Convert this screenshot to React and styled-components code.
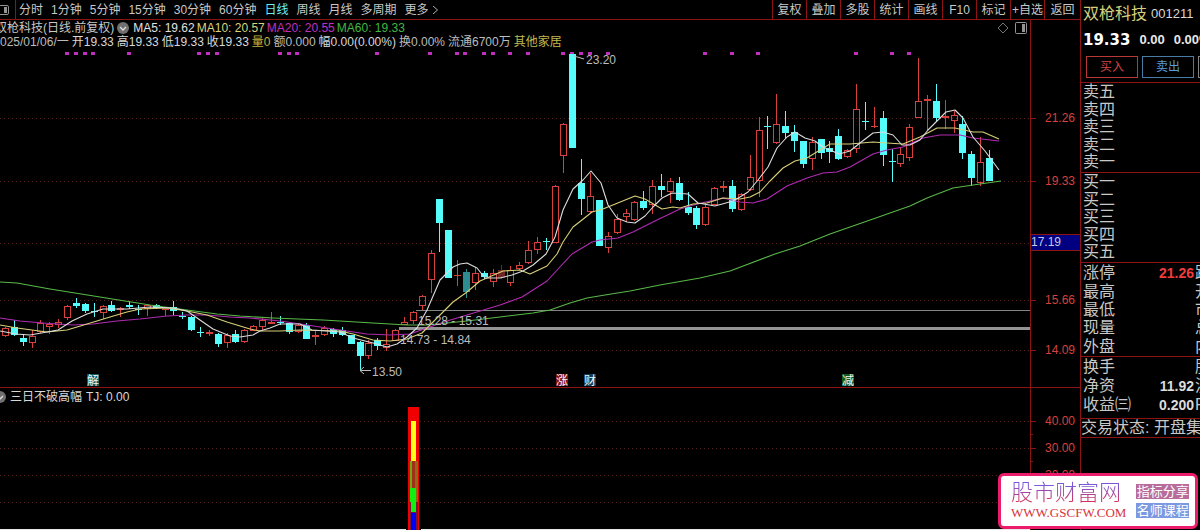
import React from "react";
import styled, { createGlobalStyle } from "styled-components";

const RED_LINE = "#8e1414";
const UP = "#d8403c";
const DOWN = "#54fcfc";
const SANS = '"Liberation Sans", "Noto Sans CJK SC", sans-serif';

const GlobalStyle = createGlobalStyle`
  * { box-sizing: border-box; }
  body {
    margin: 0;
    background: #000;
    color: #c8c8c8;
    font: 12px/14px ${SANS};
    overflow-x: hidden;
  }
  button { font: inherit; color: inherit; background: none; border: 0; padding: 0; cursor: pointer; }
  svg { display: block; }
`;

const Page = styled.div`
  display: flex;
  min-height: 100vh;
  overflow: hidden;
`;

const Main = styled.main`
  flex: 1;
  min-width: 0;
  display: flex;
  flex-direction: column;
`;

const Toolbar = styled.nav`
  display: flex;
  height: 20px;
  border-bottom: 1px solid ${RED_LINE};
  white-space: nowrap;
`;

const LayoutToggle = styled.button`
  width: 16px;
  border-right: 1px solid ${RED_LINE};
`;

const Periods = styled.div`
  flex: 1;
  display: flex;
  align-items: center;
  gap: 8px;
  padding-left: 3px;
`;

const Period = styled.button`
  display: flex;
  align-items: center;
  gap: 3px;
  color: ${(p) => (p.$active ? "#6ff0f4" : "#c8c8c8")};
`;

const Tool = styled.button`
  width: 34px;
  border-left: 1px solid ${RED_LINE};
  &:last-child { width: 36px; }
`;

const Pane = styled.section`
  display: flex;
  border-bottom: ${(p) => (p.$divided ? `1px solid ${RED_LINE}` : "0")};
`;

const PlotColumn = styled.div`
  flex: 1;
  min-width: 0;
`;

const AxisColumn = styled.div`
  width: 50px;
  border-left: 1px solid ${RED_LINE};
`;

const PlotHeader = styled.header`
  height: 30px;
  padding-top: 1px;
  overflow: hidden;
  white-space: nowrap;
`;

const HeaderRow = styled.div`
  display: flex;
  align-items: center;
  gap: ${(p) => p.$gap}px;
  height: 14px;
`;

const ChartTitle = styled.span`
  margin-left: -5px;
  padding-right: 1px;
`;

const Reading = styled.span`
  color: ${(p) => p.$color || "#d8d8d8"};
`;

const HeaderTools = styled.div`
  flex: 1;
  display: flex;
  justify-content: flex-end;
  align-items: center;
  gap: 6px;
  padding-right: 3px;
`;

const IndicatorHeader = styled.header`
  display: flex;
  align-items: center;
  gap: 4px;
  height: 17px;
  overflow: hidden;
  white-space: nowrap;
  svg { margin-left: -6px; }
`;

const PlotSvg = styled.svg`
  width: 100%;
  height: ${(p) => p.$height}px;
`;

const Side = styled.aside`
  width: 120px;
  border-left: 1px solid ${RED_LINE};
  overflow: hidden;
  white-space: nowrap;
  font-size: 16px;
`;

const QuoteHead = styled.div`
  height: 82px;
  padding-left: 2px;
`;

const QuoteName = styled.div`
  display: flex;
  align-items: center;
  gap: 4px;
  height: 28px;
  color: #d6d07c;
`;

const QuoteCode = styled.span`
  font-size: 13px;
  color: #d8d8d8;
`;

const QuotePrice = styled.div`
  display: flex;
  align-items: center;
  gap: 9px;
  height: 24px;
  font-size: 13px;
  font-weight: bold;
  color: #e8e8e8;
`;

const LastPrice = styled.strong`
  font: bold 15px "DejaVu Sans", sans-serif;
  color: #fff;
`;

const TradeRow = styled.div`
  display: flex;
  gap: 4px;
  padding: 4px 0 4px 3px;
`;

const TradeButton = styled.button`
  flex: none;
  width: 52px;
  height: 22px;
  border: 1px solid ${(p) => p.$edge};
  color: ${(p) => p.$ink};
  font-size: 12px;
`;

const Block = styled.div`
  display: grid;
  grid-auto-rows: 1fr;
  height: ${(p) => p.$height}px;
  padding: 1px 0 ${(p) => p.$foot || 0}px 2px;
  border-top: 1px solid ${RED_LINE};
  line-height: 16px;
`;

const QuoteRow = styled.div`
  display: grid;
  grid-template-columns: 50px 60px max-content;
  column-gap: 1px;
  align-items: center;
`;

const Figure = styled.span`
  text-align: right;
  font-size: 14px;
  font-weight: bold;
  color: ${(p) => p.$color || "#dcdcdc"};
`;

const Status = styled.div`
  height: 20px;
  line-height: 17px;
  border: solid ${RED_LINE};
  border-width: 1px 0;
`;

const Watermark = styled.a`
  position: fixed;
  right: 2px;
  bottom: 1px;
  width: 200px;
  height: 56px;
  display: flex;
  align-items: center;
  gap: 10px;
  padding-left: 10px;
  background: #fff;
  border: 3px solid #ec1c6c;
  border-radius: 6px;
  text-decoration: none;
  white-space: nowrap;
`;

const SiteName = styled.span`
  display: block;
  font-size: 22px;
  line-height: 23px;
  font-weight: 300;
  color: transparent;
  background: linear-gradient(#7a58d8 20%, #d03460 85%);
  background-clip: text;
  -webkit-background-clip: text;
`;

const SiteUrl = styled.span`
  display: block;
  font: 13px/17px "Liberation Serif", serif;
  color: #d8343c;
`;

const Tags = styled.span`
  display: grid;
  gap: 4px;
`;

const Tag = styled.span`
  width: 53px;
  font-size: 13px;
  line-height: 15px;
  text-align: center;
  color: #fff;
  background: ${(p) => p.$fill};
`;

/* u: rising (hollow), d: falling (solid), t: teal body, r: dim red body; then high, body top, body bottom, low */
const CANDLES = [
  ["u", 327, 328, 336, 337], ["d", 320, 327, 335, 336], ["d", 334, 338, 342, 346], ["u", 330, 336, 343, 348],
  ["u", 320, 323, 332, 333], ["u", 322, 324, 327, 334], ["u", 319, 322, 325, 328], ["u", 305, 306, 318, 320],
  ["d", 298, 303, 306, 308], ["d", 303, 304, 311, 313], ["d", 303, 311, 312, 317], ["u", 305, 306, 313, 319],
  ["d", 301, 305, 311, 312], ["u", 307, 308, 310, 317], ["d", 301, 305, 307, 309], ["d", 305, 309, 310, 315],
  ["u", 304, 305, 309, 316], ["d", 304, 305, 308, 309], ["u", 309, 309, 310, 316], ["d", 301, 307, 311, 315],
  ["d", 312, 316, 317, 319], ["d", 316, 317, 330, 331], ["d", 327, 332, 333, 337], ["u", 330, 332, 334, 336],
  ["d", 333, 334, 344, 347], ["u", 333, 335, 343, 348], ["d", 330, 334, 342, 343], ["u", 329, 330, 342, 343],
  ["u", 325, 326, 331, 331], ["u", 317, 320, 327, 330], ["u", 312, 322, 324, 324], ["d", 316, 322, 323, 325],
  ["d", 322, 323, 332, 334], ["u", 324, 325, 332, 333], ["d", 323, 325, 339, 339], ["u", 331, 335, 337, 345],
  ["u", 326, 328, 335, 336], ["d", 328, 329, 334, 337], ["d", 327, 330, 335, 336], ["d", 335, 335, 344, 344],
  ["d", 341, 342, 356, 370], ["u", 340, 343, 356, 359], ["d", 338, 340, 346, 350], ["u", 329, 344, 348, 351],
  ["u", 329, 330, 341, 341], ["u", 317, 322, 325, 325], ["u", 311, 312, 321, 324], ["u", 295, 296, 306, 311],
  ["u", 250, 253, 280, 293], ["d", 199, 199, 223, 252], ["d", 230, 230, 278, 278], ["u", 260, 275, 276, 286],
  ["t", 269, 272, 292, 298], ["u", 267, 273, 283, 290], ["d", 271, 273, 277, 279], ["u", 269, 273, 282, 287],
  ["r", 265, 270, 278, 279], ["u", 266, 270, 283, 286], ["u", 262, 265, 269, 270], ["u", 241, 250, 263, 264],
  ["u", 237, 242, 250, 254], ["d", 238, 241, 242, 250], ["u", 185, 186, 243, 243], ["u", 123, 124, 156, 173],
  ["d", 54, 54, 148, 148], ["d", 159, 183, 199, 215], ["u", 173, 196, 212, 213], ["d", 200, 200, 246, 246],
  ["u", 232, 236, 248, 253], ["u", 214, 219, 233, 234], ["u", 209, 213, 217, 222], ["u", 201, 202, 220, 221],
  ["d", 191, 201, 208, 210], ["u", 180, 186, 205, 214], ["d", 174, 186, 190, 197], ["u", 178, 181, 192, 203],
  ["d", 177, 183, 200, 201], ["d", 192, 207, 213, 215], ["d", 206, 208, 225, 229], ["u", 203, 207, 225, 226],
  ["u", 187, 188, 205, 205], ["u", 181, 186, 188, 192], ["d", 180, 186, 209, 212], ["u", 193, 194, 210, 211],
  ["u", 155, 177, 190, 191], ["u", 117, 130, 181, 197], ["d", 116, 126, 127, 149], ["u", 94, 124, 143, 144],
  ["d", 111, 126, 133, 139], ["d", 125, 132, 141, 152], ["d", 141, 141, 164, 168], ["u", 137, 142, 159, 170],
  ["d", 139, 139, 153, 159], ["d", 141, 148, 152, 163], ["d", 129, 136, 159, 160], ["u", 149, 150, 157, 158],
  ["u", 84, 109, 149, 153], ["d", 102, 121, 122, 130], ["u", 107, 126, 127, 128], ["d", 111, 118, 155, 166],
  ["d", 149, 161, 162, 182], ["u", 147, 154, 164, 167], ["u", 124, 127, 158, 161], ["u", 58, 101, 118, 118],
  ["u", 95, 99, 101, 130], ["d", 84, 101, 118, 122], ["u", 100, 116, 118, 129], ["u", 111, 115, 121, 133],
  ["d", 116, 124, 153, 159], ["d", 151, 154, 178, 186], ["u", 137, 162, 183, 186], ["d", 150, 158, 181, 181],
];

const MA_LINES = [
  ["#58b848", "0,282 17,283 50,289 100,297 150,305 187,310 217,314 240,316 273,318 323,320 373,323 407,325 427,325 467,321 500,317 533,313 550,310 570,303 587,298 605,295 630,291 660,285 700,278 730,271 775,254 800,246 830,234 873,219 890,213 910,206 927,198 953,188 980,184 1001,181"],
  ["#b02cb0", "0,318 20,321 43,323 73,325 93,324 117,321 140,319 167,316 187,315 207,315 230,317 250,318 280,321 307,325 340,330 367,334 390,335 410,334 427,328 447,321 467,315 500,305 522,297 547,281 572,254 592,242 600,240 618,238 633,232 657,220 680,209 697,204 723,198 740,202 753,203 767,199 787,186 807,178 823,173 837,172 850,167 873,154 887,150 903,147 923,138 940,135 960,135 973,138 999,141"],
  ["#d8d078", "0,325 17,328 47,332 67,330 87,324 110,317 127,312 140,309 167,308 187,311 207,315 227,322 250,329 260,331 280,331 300,330 340,331 353,334 373,340 390,341 407,339 422,333 437,318 453,302 467,292 480,281 503,271 520,270 530,274 547,266 557,254 563,242 573,227 582,220 592,212 603,209 635,196 645,199 662,209 673,207 680,208 693,204 707,203 723,198 740,199 750,197 760,192 770,181 783,168 795,161 807,158 820,150 830,144 850,144 873,142 887,143 903,144 920,137 937,128 955,128 973,132 983,132 999,139"],
  ["#dcdcdc", "0,331 16,334 30,335 47,332 58,330 72,321 87,314 103,309 127,309 150,307 173,308 187,311 200,320 213,329 230,336 240,337 253,335 260,331 270,328 280,324 300,324 312,330 340,332 353,338 373,343 387,347 397,344 407,337 417,328 427,310 440,280 453,267 460,264 467,263 477,268 485,278 500,278 512,275 523,271 533,265 546,254 555,237 563,210 573,189 583,180 591,171 601,183 608,205 617,218 627,222 635,223 645,216 653,207 662,198 672,193 688,194 698,203 715,206 733,201 740,197 748,192 758,180 768,167 777,148 787,137 795,132 805,138 815,141 823,147 839,154 850,151 860,143 873,133 883,132 893,135 902,145 910,145 920,140 928,130 937,121 946,112 955,110 963,118 973,137 985,151 999,170"],
];

const SIGNAL_DOTS = [67, 76, 85, 93, 129, 199, 208, 217, 280, 289, 297, 377, 430, 457, 465, 484, 493, 510, 528, 563, 572, 581, 590, 608, 705, 732, 758, 856, 892, 909];

const EVENTS = [
  { x: 87, mark: "解", fill: "#0c5c60" },
  { x: 556, mark: "涨", fill: "#801414" },
  { x: 584, mark: "财", fill: "#0c3c5c" },
  { x: 842, mark: "减", fill: "#0c5c24" },
];

const Candle = ({ index, kind, high, top, bottom, low }) => {
  const x = Math.round(5 + 8.865 * index);
  const color = kind === "d" ? DOWN : kind === "t" ? "#2c8c90" : kind === "r" ? "#6c2424" : UP;
  const hollow = kind === "u" && bottom - top > 2;
  return (
    <g shapeRendering="crispEdges">
      <rect x={x} y={high} width="1" height={Math.max(top - high, 0)} fill={color} />
      <rect x={x} y={bottom} width="1" height={Math.max(low - bottom, 0)} fill={color} />
      {hollow ? (
        <rect x={x - 2.5} y={top + 0.5} width="6" height={bottom - top - 1} fill="none" stroke={color} />
      ) : (
        <rect x={x - 3} y={top} width="7" height={Math.max(bottom - top, 1)} fill={color} />
      )}
    </g>
  );
};

const GridLines = ({ rows }) =>
  rows.map((y) => (
    <line key={y} x1="0" x2="1030" y1={y + 0.5} y2={y + 0.5} stroke="#542020" strokeDasharray="1 3" shapeRendering="crispEdges" />
  ));

const PricePlot = () => (
  <PlotSvg $height={337} viewBox="0 50 1030 337" preserveAspectRatio="xMaxYMid meet" role="img" aria-label="日线图">
    <GridLines rows={[118, 181, 243, 300, 350]} />
    {SIGNAL_DOTS.map((x) => (
      <rect key={x} x={x - 2} y="52" width="4" height="3" fill="#c030c0" />
    ))}
    {CANDLES.map(([kind, high, top, bottom, low], i) => (
      <Candle key={i} index={i} kind={kind} high={high} top={top} bottom={bottom} low={low} />
    ))}
    <rect x="416" y="310" width="614" height="1" fill="#848484" />
    <rect x="399" y="327" width="631" height="3" fill="#949494" />
    {MA_LINES.map(([color, points]) => (
      <polyline key={color} points={points} fill="none" stroke={color} strokeWidth="1.1" strokeLinejoin="round" />
    ))}
    <g fill="#bcbcbc" fontSize="12">
      <text x="586" y="64">23.20</text>
      <text x="418" y="325">15.28 - 15.31</text>
      <text x="400" y="344">14.73 - 14.84</text>
      <text x="372" y="376">13.50</text>
    </g>
    <path d="M574 56 L584 59 M360 370.500 H371 M364 367 L360 370.500 L364 374" fill="none" stroke="#bcbcbc" />
    {EVENTS.map(({ x, mark, fill }) => (
      <g key={mark}>
        <rect x={x} y="374" width="12" height="12" fill={fill} />
        <text x={x} y="385" fontSize="12" fill="#f0f8f8">{mark}</text>
      </g>
    ))}
  </PlotSvg>
);

const PriceAxis = () => (
  <svg width="49" height="367" viewBox="1031 20 49 367">
    {[[118, "21.26"], [181, "19.33"], [300, "15.66"], [350, "14.09"]].map(([y, label]) => (
      <g key={label}>
        <rect x="1031" y={y} width="5" height="1" fill={RED_LINE} />
        <text x="1045" y={y + 4} fontSize="12" fill={UP}>{label}</text>
      </g>
    ))}
    <rect x="1031" y="234" width="49" height="17" fill={RED_LINE} />
    <rect x="1031" y="235" width="49" height="15" fill="#000080" />
    <text x="1031" y="246" fontSize="12" fill="#c8c8e4">17.19</text>
  </svg>
);

const IndicatorPlot = () => (
  <PlotSvg $height={125} viewBox="0 405 1030 125" preserveAspectRatio="xMaxYMid meet" role="img" aria-label="三日不破高幅">
    <GridLines rows={[421, 448, 475, 502]} />
    <g shapeRendering="crispEdges">
      <rect x="0" y="529" width="406" height="1" fill="#e8e8e8" />
      <rect x="421" y="529" width="609" height="1" fill="#e8e8e8" />
      <rect x="408" y="407" width="11" height="123" fill="#f00000" />
      <rect x="411" y="421" width="5" height="40" fill="#ffff18" />
      <rect x="410" y="461" width="8" height="41" fill="#8c6c10" />
      <rect x="410" y="461" width="2" height="27" fill="#70a818" />
      <rect x="412" y="461" width="3" height="27" fill="#a03018" />
      <rect x="410" y="488" width="6" height="14" fill="#10f010" />
      <rect x="410" y="502" width="8" height="28" fill="#701838" />
      <rect x="411" y="502" width="5" height="10" fill="#10f010" />
      <rect x="411" y="513" width="5" height="17" fill="#0000f8" />
    </g>
  </PlotSvg>
);

const IndicatorAxis = () => (
  <svg width="49" height="142" viewBox="1031 388 49 142">
    {[[421, "40.00"], [448, "30.00"], [475, "20.00"]].map(([y, label]) => (
      <g key={label}>
        <rect x="1031" y={y} width="5" height="1" fill={RED_LINE} />
        <rect x="1031" y={y + 13} width="2" height="1" fill={RED_LINE} />
        <text x="1045" y={y + 4} fontSize="12" fill={UP}>{label}</text>
      </g>
    ))}
  </svg>
);

const CheckDisc = () => (
  <svg width="12" height="12" viewBox="0 0 12 12" fill="none">
    <circle cx="6" cy="6" r="6" fill="#707070" />
    <path d="M3 5 L6 8 L9 5" stroke="#e0e0e0" strokeWidth="1.3" />
  </svg>
);

const PanelIcon = () => (
  <svg width="12" height="12" viewBox="0 0 12 12" fill="none">
    <rect x="0.500" y="0.500" width="11" height="11" rx="1" stroke="#949494" />
    <rect x="7" y="2" width="3" height="8" fill="#949494" />
  </svg>
);

const PERIODS = ["分时", "1分钟", "5分钟", "15分钟", "30分钟", "60分钟", "日线", "周线", "月线", "多周期", "更多"];
const TOOLS = ["复权", "叠加", "多股", "统计", "画线", "F10", "标记", "+自选", "返回"];

const AVERAGES = [
  ["MA5: 19.62", "#e0e0e0"],
  ["MA10: 20.57", "#dcd47c"],
  ["MA20: 20.55", "#c030c0"],
  ["MA60: 19.33", "#40b840"],
];

const DAY_READINGS = [
  ["025/01/06/一", "#bcbcbc"], ["开19.33"], ["高19.33"], ["低19.33"], ["收19.33"],
  ["量0", "#c0b040"], ["额0.000", "#bcbcbc"], ["幅0.00(0.00%)"], ["换0.00%", "#bcbcbc"],
  ["流通6700万", "#bcbcbc"], ["其他家居", "#c0b850"],
];

const SELL_LEVELS = ["卖五", "卖四", "卖三", "卖二", "卖一"];
const BUY_LEVELS = ["买一", "买二", "买三", "买四", "买五"];

const DAY_STATS = [
  ["涨停", "21.26", "跌停", "#f03c3c"],
  ["最高", "", "开盘"],
  ["最低", "", "市值"],
  ["现量", "", "总量"],
  ["外盘", "", "内盘"],
];

const COMPANY_STATS = [
  ["换手", "", "股本"],
  ["净资", "11.92", "流通"],
  ["收益㈢", "0.200", "PE"],
];

const StatRows = ({ rows }) =>
  rows.map(([label, value, next, color]) => (
    <QuoteRow key={label}>
      <span>{label}</span>
      <Figure $color={color}>{value}</Figure>
      <span>{next}</span>
    </QuoteRow>
  ));

export default function App() {
  return (
    <>
      <GlobalStyle />
      <Page>
        <Main>
          <Toolbar>
            <LayoutToggle aria-label="切换布局">
              <svg width="9" height="12" viewBox="0 0 9 12" fill="none">
                <path d="M0 1.500 H7 Q8.500 1.500 8.500 3 V9 Q8.500 10.500 7 10.500 H0" stroke="#949494" />
                <rect x="4" y="3" width="3" height="6" fill="#949494" />
              </svg>
            </LayoutToggle>
            <Periods>
              {PERIODS.map((name) => (
                <Period key={name} $active={name === "日线"}>
                  {name}
                  {name === "更多" && (
                    <svg width="7" height="10" viewBox="0 0 7 10" fill="none">
                      <path d="M1 1 L5.500 5 L1 9" stroke="#b0b0b0" />
                    </svg>
                  )}
                </Period>
              ))}
            </Periods>
            {TOOLS.map((name) => (
              <Tool key={name}>{name}</Tool>
            ))}
          </Toolbar>

          <Pane $divided>
            <PlotColumn>
              <PlotHeader>
                <HeaderRow $gap={2}>
                  <ChartTitle>双枪科技(日线.前复权)</ChartTitle>
                  <CheckDisc />
                  <span />
                  {AVERAGES.map(([text, color]) => (
                    <Reading key={text} $color={color}>{text}</Reading>
                  ))}
                  <HeaderTools>
                    <svg width="12" height="12" viewBox="0 0 12 12" fill="none">
                      <path d="M6 1 L11 6 L6 11 L1 6 Z" stroke="#747474" />
                    </svg>
                    <PanelIcon />
                  </HeaderTools>
                </HeaderRow>
                <HeaderRow $gap={3}>
                  {DAY_READINGS.map(([text, color]) => (
                    <Reading key={text} $color={color}>{text}</Reading>
                  ))}
                </HeaderRow>
              </PlotHeader>
              <PricePlot />
            </PlotColumn>
            <AxisColumn>
              <PriceAxis />
            </AxisColumn>
          </Pane>

          <Pane>
            <PlotColumn>
              <IndicatorHeader>
                <CheckDisc />
                <Reading>三日不破高幅</Reading>
                <Reading>TJ: 0.00</Reading>
              </IndicatorHeader>
              <IndicatorPlot />
            </PlotColumn>
            <AxisColumn>
              <IndicatorAxis />
            </AxisColumn>
          </Pane>
        </Main>

        <Side>
          <QuoteHead>
            <QuoteName>
              双枪科技 <QuoteCode>001211</QuoteCode>
            </QuoteName>
            <QuotePrice>
              <LastPrice>19.33</LastPrice>
              <span>0.00</span>
              <span>0.00%</span>
            </QuotePrice>
            <TradeRow>
              <TradeButton $edge="#b83838" $ink="#d84444">买入</TradeButton>
              <TradeButton $edge="#487ca4" $ink="#5c9cdc">卖出</TradeButton>
              <TradeButton $edge="#848484" $ink="#c8c8c8">撤单</TradeButton>
            </TradeRow>
          </QuoteHead>
          <Block $height={90}>
            {SELL_LEVELS.map((level) => <span key={level}>{level}</span>)}
          </Block>
          <Block $height={90}>
            {BUY_LEVELS.map((level) => <span key={level}>{level}</span>)}
          </Block>
          <Block $height={94}>
            <StatRows rows={DAY_STATS} />
          </Block>
          <Block $height={62} $foot={4}>
            <StatRows rows={COMPANY_STATS} />
          </Block>
          <Status>交易状态: 开盘集合竞价</Status>
        </Side>
      </Page>

      <Watermark href="#gscfw">
        <span>
          <SiteName>股市财富网</SiteName>
          <SiteUrl>WWW.GSCFW.COM</SiteUrl>
        </span>
        <Tags>
          <Tag $fill="#b86c9c">指标分享</Tag>
          <Tag $fill="#7c98e0">名师课程</Tag>
        </Tags>
      </Watermark>
    </>
  );
}
